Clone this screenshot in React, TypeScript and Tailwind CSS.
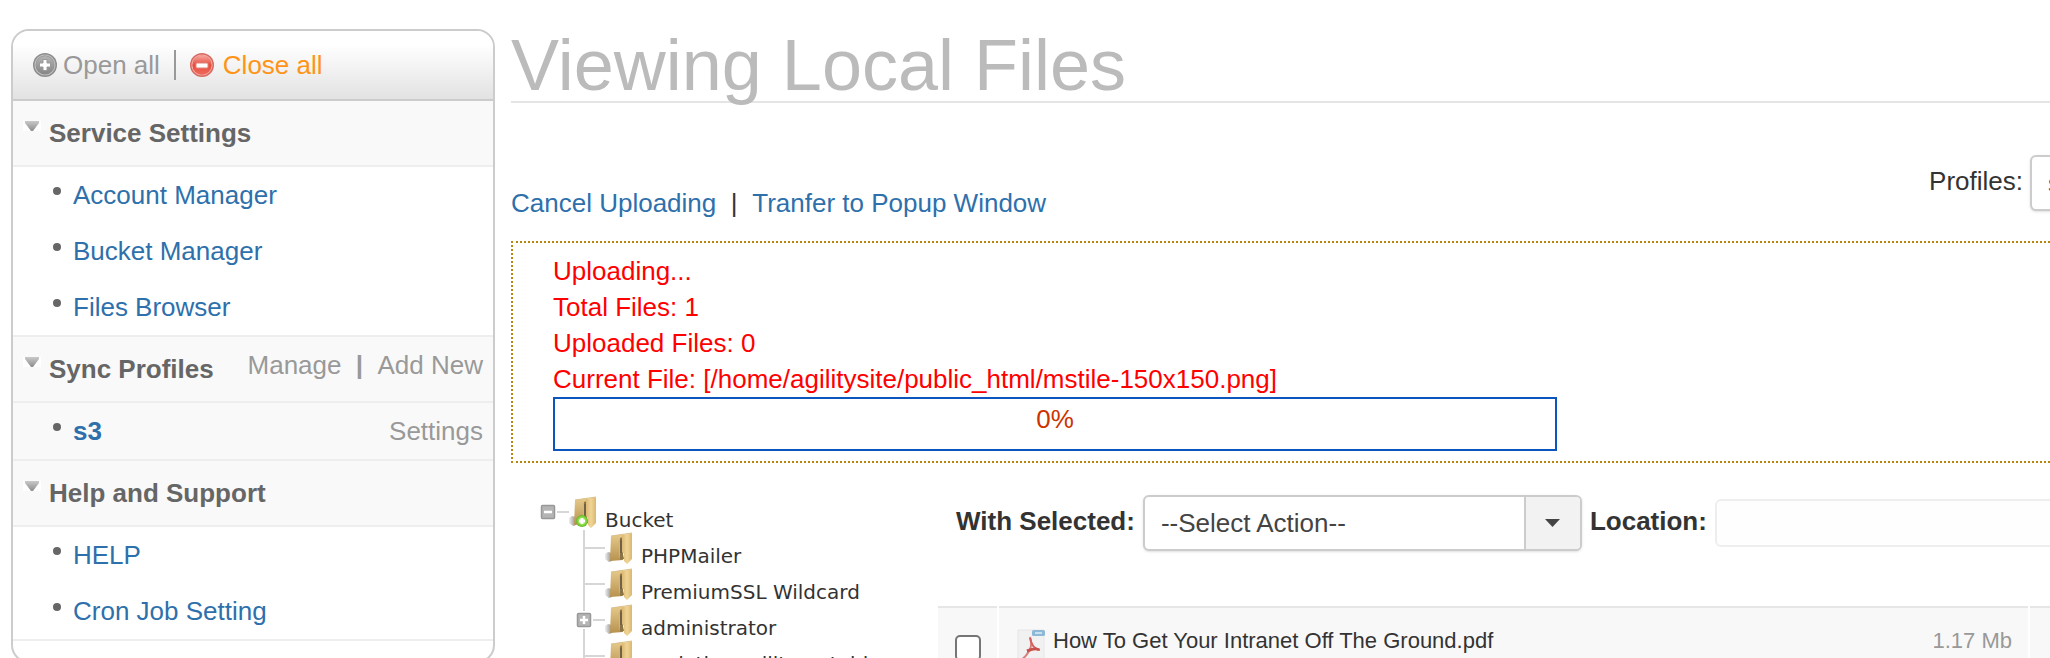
import { Fragment } from "react"

const sections = [
  {
    title: "Service Settings",
    actions: [],
    items: [{ label: "Account Manager" }, { label: "Bucket Manager" }, { label: "Files Browser" }],
  },
  {
    title: "Sync Profiles",
    actions: ["Manage", "Add New"],
    items: [{ label: "s3", active: true, action: "Settings" }],
  },
  {
    title: "Help and Support",
    actions: [],
    items: [{ label: "HELP" }, { label: "Cron Job Setting" }],
  },
] as {
  title: string
  actions: string[]
  items: { label: string; active?: boolean; action?: string }[]
}[]

const folders = [
  { name: "PHPMailer" },
  { name: "PremiumSSL Wildcard" },
  { name: "administrator", expandable: true },
  { name: "analytics.agilitymetabi" },
]

const files = [{ name: "How To Get Your Intranet Off The Ground.pdf", size: "1.17 Mb" }]

const OpenIcon = () => (
  <svg className="h-6 w-6" viewBox="0 0 24 24" aria-hidden="true">
    <defs>
      <linearGradient id="open-fill" x1="0" y1="0" x2="0" y2="1">
        <stop offset="0" stopColor="#b4b4b4" />
        <stop offset="1" stopColor="#868686" />
      </linearGradient>
    </defs>
    <circle cx="12" cy="12" r="12" fill="#8c8c8c" />
    <circle cx="12" cy="12" r="10" fill="none" stroke="#bdbdbd" strokeWidth="1.2" />
    <circle cx="12" cy="12" r="9" fill="url(#open-fill)" />
    <path d="M10 6.500h4v3.500h3.500v4h-3.500v3.500h-4v-3.500h-3.500v-4h3.500z" fill="#fff" stroke="#9a9a9a" />
  </svg>
)

const CloseIcon = () => (
  <svg className="h-6 w-6" viewBox="0 0 24 24" aria-hidden="true">
    <defs>
      <linearGradient id="close-fill" x1="0" y1="0" x2="0" y2="1">
        <stop offset="0" stopColor="#f5a79e" />
        <stop offset="0.500" stopColor="#e84c3f" />
        <stop offset="1" stopColor="#ee6a5c" />
      </linearGradient>
    </defs>
    <circle cx="12" cy="12" r="12" fill="#d66a62" />
    <circle cx="12" cy="12" r="10" fill="none" stroke="#f5a79f" strokeWidth="1.2" />
    <circle cx="12" cy="12" r="9.500" fill="url(#close-fill)" />
    <rect x="6" y="10" width="12" height="5" rx="1" fill="#fff" stroke="#e0837b" />
  </svg>
)

const Caret = () => (
  <svg className="mb-[14px] h-[10px] w-[18px]" viewBox="0 0 18 10" aria-hidden="true">
    <defs>
      <linearGradient id="caret-fill" x1="0" y1="0" x2="0" y2="1">
        <stop offset="0" stopColor="#c9c9c9" />
        <stop offset="1" stopColor="#8c8c8c" />
      </linearGradient>
    </defs>
    <rect width="18" height="10" fill="#fff" />
    <path d="M2 0h14v2l-6 8h-2l-6-8z" fill="url(#caret-fill)" />
  </svg>
)

const Folder = ({ root = false }: { root?: boolean }) => (
  <svg className="h-9 w-9 shrink-0" viewBox="0 0 36 36" aria-hidden="true">
    <defs>
      <linearGradient id="folder-left" x1="0" y1="0" x2="0" y2="1">
        <stop offset="0" stopColor="#e6ca8c" />
        <stop offset="1" stopColor="#b8924f" />
      </linearGradient>
      <linearGradient id="folder-right" x1="0" y1="0" x2="1" y2="0">
        <stop offset="0" stopColor="#dcb973" />
        <stop offset="0.500" stopColor="#f0d596" />
        <stop offset="1" stopColor="#dab76f" />
      </linearGradient>
      <linearGradient id="folder-disc" x1="0" y1="0" x2="1" y2="0">
        <stop offset="0" stopColor="#efefef" />
        <stop offset="1" stopColor="#8c8c8c" />
      </linearGradient>
      <radialGradient id="folder-badge">
        <stop offset="0.200" stopColor="#f2ffe4" />
        <stop offset="0.600" stopColor="#8fe04b" />
        <stop offset="1" stopColor="#63b528" />
      </radialGradient>
    </defs>
    <path d="M3 24l3-2 4 1v8l-3 1-4-3z" fill="url(#folder-disc)" />
    <path d="M9 6l12-2v26l-13 1z" fill="url(#folder-left)" />
    <path d="M18 8l3-1v17l1 5-4 1z" fill="#8a7446" />
    <path d="M17 9h1v14l-1 7z" fill="#c9b78c" />
    <path d="M20 5l10-2v26l-5 5-3-3v-7l-2-2z" fill="url(#folder-right)" />
    <path d="M18 10h2v13h-2z" fill="#6f6248" />
    <path d="M9 6l21-3" stroke="#dcc28a" />
    {root && <circle cx="16" cy="27" r="6" fill="url(#folder-badge)" />}
    {root && <path d="M16 24v6M13 27h6" stroke="#fff" strokeWidth="2.500" />}
  </svg>
)

const NodeBox = ({ plus = false }: { plus?: boolean }) => (
  <>
    <rect x="11.500" y="11.500" width="13" height="13" rx="1" fill="#b5b5b5" stroke="#989898" strokeWidth="1.500" />
    <path d="M14 18h8" stroke="#fff" strokeWidth="2.500" />
    {plus && <path d="M18 14v8" stroke="#fff" strokeWidth="2.500" />}
    <path d="M27 18h12" stroke="#d6d6d6" strokeWidth="2" />
  </>
)

const Branch = ({ expandable = false }: { expandable?: boolean }) => (
  <svg className="h-9 w-9 shrink-0 overflow-visible" viewBox="0 0 36 36" aria-hidden="true">
    {expandable ? (
      <>
        <path d="M18 0v9M18 27v9" stroke="#d6d6d6" strokeWidth="2" />
        <NodeBox plus />
      </>
    ) : (
      <path d="M18 0v36M18 18h21" stroke="#d6d6d6" strokeWidth="2" fill="none" />
    )}
  </svg>
)

const PdfIcon = () => (
  <svg className="h-8 w-8 shrink-0" viewBox="0 0 32 32" aria-hidden="true">
    <path d="M1 1h26v30h-26z" fill="#f1f1f1" stroke="#e6e6e6" />
    <rect x="15" y="1" width="13" height="6" rx="1.500" fill="#8db9d6" />
    <path d="M18 4h7" stroke="#c9e0ee" strokeWidth="2" />
    <path d="M13 8c2 5 2 9-1 14-2 4-5 7-8 9" fill="none" stroke="#d9807c" strokeWidth="2" />
    <path d="M13 9c1 6 4 11 10 12" fill="none" stroke="#d2645f" strokeWidth="2" />
    <path d="M10 22c5-2 10-3 12-1" fill="none" stroke="#c9504b" strokeWidth="3" />
  </svg>
)

const Sidebar = () => (
  <aside className="mt-[29px] ml-[11px] w-[484px] shrink-0 overflow-hidden rounded-[18px] border-2 border-[#ccc] bg-white pb-5">
    <div className="flex h-[70px] items-center border-b-2 border-[#ccc] bg-linear-to-b from-white from-20% to-[#e2e2e2] pl-5">
      <a href="#open" className="flex items-center gap-[6px] text-[#999]">
        <OpenIcon />
        Open all
      </a>
      <span className="mx-[14px] h-[30px] w-[2px] bg-[#999]" />
      <a href="#close" className="flex items-center gap-[9px] text-[#ff9417]">
        <CloseIcon />
        Close all
      </a>
    </div>
    {sections.map((section) => (
      <section key={section.title} className="border-b-2 border-[#eee]">
        <div className="flex h-[66px] items-center border-b-2 border-[#eee] bg-[#f9f9f9] px-[10px]">
          <Caret />
          <h2 className="ml-2 font-bold text-[#666]">{section.title}</h2>
          <div className="ml-auto flex pb-2 text-[#999]">
            {section.actions.map((action, index) => (
              <Fragment key={action}>
                {index > 0 && <b className="w-9 text-center">|</b>}
                <a href="#profiles">{action}</a>
              </Fragment>
            ))}
          </div>
        </div>
        <ul>
          {section.items.map((item) => (
            <li
              key={item.label}
              className={`flex h-14 items-center pr-[10px] pl-10 ${item.active ? "bg-[#f9f9f9]" : "bg-white"}`}
            >
              <span className="mr-3 mb-2 h-2 w-2 rounded-full bg-[#666]" />
              <a href="#item" className={`text-[#2e70ab] ${item.active ? "font-bold" : ""}`}>
                {item.label}
              </a>
              {item.action && (
                <a href="#settings" className="ml-auto text-[#999]">
                  {item.action}
                </a>
              )}
            </li>
          ))}
        </ul>
      </section>
    ))}
  </aside>
)

const UploadStatus = () => (
  <div className="border-2 border-dotted border-[#b8860b] py-[10px] pl-10 text-[#f00]">
    <p>Uploading...</p>
    <p>Total Files: 1</p>
    <p>Uploaded Files: 0</p>
    <p>Current File: [/home/agilitysite/public_html/mstile-150x150.png]</p>
    <div
      role="progressbar"
      aria-valuenow={0}
      aria-label="Upload progress"
      className="h-[54px] w-[1004px] border-2 border-[#0c55bf] pt-[2px] text-center text-[#c30]"
    >
      0%
    </div>
  </div>
)

const FolderTree = () => (
  <div className="w-[425px] shrink-0 pt-[31px] pl-[19px] font-['DejaVu_Sans',sans-serif] text-[20px] leading-5">
    <div className="flex items-end">
      <svg className="h-9 w-9 shrink-0 overflow-visible" viewBox="0 0 36 36" aria-hidden="true">
        <NodeBox />
      </svg>
      <Folder root />
      <span className="pl-[3px]">Bucket</span>
    </div>
    <ul className="pl-9">
      {folders.map((folder) => (
        <li key={folder.name} className="flex items-end">
          <Branch expandable={folder.expandable} />
          <Folder />
          <span className="pl-[3px]">{folder.name}</span>
        </li>
      ))}
    </ul>
  </div>
)

const FileList = () => (
  <div className="min-w-0 flex-1 pt-8">
    <div className="flex items-center gap-2 pl-5">
      <label htmlFor="action" className="shrink-0 pb-1 font-bold">
        With Selected:
      </label>
      <div className="relative w-[439px] shrink-0">
        <select
          id="action"
          className="h-14 w-full appearance-none rounded-md border-2 border-[#ccc] bg-white pl-4 text-[#444] shadow-sm"
        >
          <option>--Select Action--</option>
        </select>
        <span className="pointer-events-none absolute inset-y-[2px] right-[2px] flex w-14 items-center justify-center rounded-r border-l-2 border-[#ccc] bg-[#f2f2f2]">
          <svg className="h-2 w-[15px]" viewBox="0 0 15 8" aria-hidden="true">
            <path d="M0 0h15l-7.500 8z" fill="#444" />
          </svg>
        </span>
      </div>
      <label htmlFor="location" className="shrink-0 pb-1 font-bold">
        Location:
      </label>
      <input id="location" type="text" className="h-12 min-w-0 flex-1 rounded-md border-2 border-[#eee] bg-[#fefefe] px-4" />
    </div>
    <table className="mt-[55px] w-full table-fixed border-t-2 border-[#e6e6e6] text-[22px] leading-6">
      <colgroup>
        <col className="w-[61px]" />
        <col />
        <col className="w-[160px]" />
        <col className="w-[121px]" />
      </colgroup>
      <tbody>
        {files.map((file) => (
          <tr key={file.name} className="h-20 bg-[#f8f8f8] align-top">
            <td className="border-l-2 border-white pt-[27px] pl-[17px]">
              <input
                type="checkbox"
                aria-label={file.name}
                className="block h-[26px] w-[26px] appearance-none rounded-[5px] border-2 border-[#767676] bg-white"
              />
            </td>
            <td className="border-l-2 border-white pt-[21px] pl-[18px]">
              <a href="#file" className="flex gap-1">
                <PdfIcon />
                {file.name}
              </a>
            </td>
            <td className="pt-[21px] pr-4 text-right text-[#999]">{file.size}</td>
            <td className="border-l-2 border-white" />
          </tr>
        ))}
      </tbody>
    </table>
  </div>
)

const App = () => {
  return (
    <div className="flex h-screen items-start overflow-hidden bg-white font-['Liberation_Sans',Arial,sans-serif] text-[26px] leading-9 text-[#333]">
      <Sidebar />
      <main className="-mr-[100px] ml-4 min-w-0 flex-1">
        <h1 className="mt-[29px] border-b-2 border-[#e5e5e5] text-[72px] leading-[72px] text-[#bbb]">
          Viewing Local Files
        </h1>
        <div className="flex items-end justify-between pt-[52px]">
          <div className="flex pb-5 text-[#2e70ab]">
            <a href="#cancel">Cancel Uploading</a>
            <span className="w-9 text-center text-[#333]">|</span>
            <a href="#popup">Tranfer to Popup Window</a>
          </div>
          <div className="flex items-center gap-[7px] pb-[30px]">
            <label htmlFor="profile" className="pb-1">
              Profiles:
            </label>
            <select
              id="profile"
              className="h-14 w-[120px] appearance-none rounded-md border-2 border-[#ccc] bg-white pl-4 text-[#444] shadow-sm"
            >
              <option>s3</option>
            </select>
          </div>
        </div>
        <UploadStatus />
        <div className="flex items-start">
          <FolderTree />
          <FileList />
        </div>
      </main>
    </div>
  )
}

export default App
